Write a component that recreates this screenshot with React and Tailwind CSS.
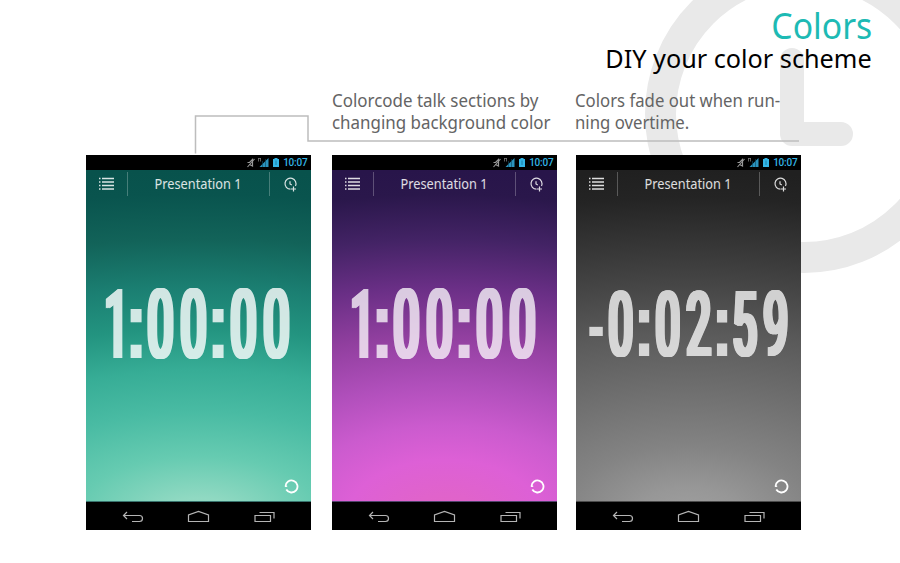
const themes = {
  green:
    "bg-[radial-gradient(720px_345px_at_50%_345px,#97dbc5_0%,#90d9c2_5%,#66cbb1_17%,#49bba3_30%,#37ad96_42%,#239480_54%,#1b7f72_66%,#126359_80%,#09544e_93%,#08524c_100%)]",
  purple:
    "bg-[radial-gradient(600px_345px_at_50%_345px,#e264c6_0%,#e063cb_6%,#dd60d6_16%,#cb5bce_26%,#b04fbb_38%,#913f9f_52%,#6a2f86_66%,#432365_80%,#2a174b_93%,#28154a_100%)]",
  gray:
    "bg-[radial-gradient(640px_345px_at_50%_345px,#9f9f9f_0%,#979797_8%,#838383_20%,#6f6f6f_36%,#5a5a5a_53%,#474747_66%,#343434_80%,#242424_92%,#202020_100%)]",
};

function StatusBar() {
  return (
    <div className="flex h-[15px] items-center justify-end bg-black pr-[3.500px]">
      <svg className="h-[15px] w-[36px]" viewBox="0 0 36 15" fill="none">
        <path d="M1.500 7.500h2l3-3v6.500L3.500 9.500" stroke="#999" strokeWidth="1.200" />
        <path d="M1.500 12 8.500 4" stroke="#999" strokeWidth="1.100" />
        <path d="M12.500 3v3.500M14.500 3v3.500M12 3.500h3" stroke="#777" strokeWidth=".8" />
        <path d="M13.500 12 22.500 3v9Z" fill="#2b93bd" />
        <path d="M16.500 6v6M19.500 4v8" stroke="#0c4a63" strokeWidth=".6" />
        <path d="M27 4h6v8h-6Z" fill="#33b5e5" />
        <path d="M28.500 3h3v1h-3Z" fill="#33b5e5" />
        <path d="M30 5.500v4.500" stroke="#1a7ea6" strokeWidth="1" />
      </svg>
      <span className="ml-[1px] font-['Roboto',sans-serif] text-[10px] font-medium leading-[15px] tracking-[-0.2px] text-[#33b5e5]">10:07</span>
    </div>
  );
}

function ActionBar() {
  return (
    <div className="flex h-[28px] items-center text-white/85">
      <div className="flex h-[24px] w-[42px] items-center justify-center border-r border-white/25">
        <svg className="h-[14px] w-[15px]" viewBox="0 0 15 14" stroke="currentColor" strokeWidth="1.300">
          <path d="M0 1.500h1.500M3 1.500h12M0 5h1.500M3 5h12M0 8.500h1.500M3 8.500h12M0 12h1.500M3 12h12" />
        </svg>
      </div>
      <div className="flex flex-1 justify-center">
        <span className="inline-block scale-x-[.945] whitespace-nowrap font-['Noto_Sans',sans-serif] text-[13.5px] leading-[24px]">Presentation 1</span>
      </div>
      <div className="flex h-[24px] w-[42px] items-center justify-center border-l border-white/25">
        <svg className="h-[15px] w-[15px]" viewBox="0 0 15 15" fill="none" stroke="currentColor" strokeWidth="1.200">
          <path d="M7.500 12.200A5.500 5.500 0 1 1 12.500 9M7 4.200V7l1.800 1M10.500 9.500v5M8 12h5" />
        </svg>
      </div>
    </div>
  );
}

function NavBar() {
  return (
    <div className="flex h-[28px] items-center bg-black">
      <svg className="h-[28px] w-[225px]" viewBox="0 0 225 28" fill="none" stroke="#b4b4b4" strokeWidth="1.200">
        <path d="M41 10 37.500 13.500 41 17M38 13.500H53.500a2.500 2.500 0 0 1 0 6H46" />
        <path d="M102.500 19.500V13L112.500 9.500 122.500 13V19.500Z" />
        <path d="M169 13.500H184.500V19.500H169ZM173.500 10.500H188V16.500" />
      </svg>
    </div>
  );
}

const DIGIT =
  "font-['Roboto',sans-serif] font-medium [text-shadow:1.500px_0_white,-1.500px_0_white,3px_0_white,-3px_0_white,4.300px_0_white,-4.300px_0_white]";

// Cell width and glyph shape for each kind of timer character.
const cells = {
  digit: { cell: "w-[.344em]", glyph: `${DIGIT} scale-x-[.486]` },
  "1": { cell: "w-[.263em]", glyph: `${DIGIT} translate-x-[2px] scale-x-[.45]` },
  ":": { cell: "w-[.170em]", glyph: "font-['Liberation_Sans',sans-serif] font-bold scale-x-[.8]" },
  "-": { cell: "w-[.212em]", glyph: "font-['DejaVu_Sans',sans-serif] font-bold text-[.91em] scale-x-[.53] scale-y-[.78]" },
};

function Timer({ time, className }) {
  return (
    <div className={`mt-[77px] flex items-baseline leading-[100px] text-white ${className}`}>
      {time.split("").map((char, i) => {
        const { cell, glyph } = cells[char] ?? cells.digit;
        return (
          <span key={i} className={`flex shrink-0 justify-center ${cell}`}>
            <span className={`shrink-0 ${glyph}`}>{char}</span>
          </span>
        );
      })}
    </div>
  );
}

function Phone({ theme, time, timeClass }) {
  return (
    <div className="flex h-[375px] w-[225px] flex-col overflow-hidden">
      <StatusBar />
      <div className={`flex h-[332px] flex-col border-b border-white/20 ${themes[theme]}`}>
        <ActionBar />
        <div className="flex-1">
          <Timer time={time} className={timeClass} />
        </div>
        <div className="flex h-[22px] justify-end pr-[12.500px]">
          <svg className="h-[15px] w-[15px]" viewBox="0 0 15 15" fill="none" stroke="#fff" strokeWidth="1.800">
            <path d="M2.300 10.500A6 6 0 1 0 1.500 7.500" />
            <path d="M1 7.300H3.200" strokeWidth="1.200" />
          </svg>
        </div>
      </div>
      <NavBar />
    </div>
  );
}

export default function App() {
  return (
    <div className="relative h-[563px] w-[900px] overflow-hidden bg-white font-['Noto_Sans',sans-serif]">
      <svg className="absolute inset-0 h-full w-full" viewBox="0 0 900 563" fill="none">
        <circle cx="804" cy="114" r="143.500" stroke="#e9e9e9" strokeWidth="31" />
        <path d="M792 60V134H841" stroke="#e9e9e9" strokeWidth="24" strokeLinecap="round" strokeLinejoin="round" />
        <path d="M195.500 153.500V116H308V141H799" stroke="#bdbdbd" strokeWidth="1.500" />
      </svg>
      <div className="relative">
        <header className="flex h-[89px] flex-col items-end pr-[28px] pt-[5px]">
          <h1 className="origin-right scale-x-[.95] text-[35.5px] leading-[40px] text-[#1dbab4]">Colors</h1>
          <p className="origin-right scale-x-[.97] text-[26px] leading-[26px] text-black">DIY your color scheme</p>
        </header>
        <div className="flex h-[66px] pl-[332px] text-[18px] leading-[22px] text-[#646464]">
          <p className="w-[243px] whitespace-nowrap"><span className="inline-block origin-left scale-x-[.94]">Colorcode talk sections by<br />changing background color</span></p>
          <p className="whitespace-nowrap"><span className="inline-block origin-left scale-x-[.93]">Colors fade out when run-<br />ning overtime.</span></p>
        </div>
        <main className="flex pl-[86px]">
          <Phone theme="green" time="1:00:00" timeClass="pl-[16px] text-[96.5px] opacity-80" />
          <div className="ml-[21px]">
            <Phone theme="purple" time="1:00:00" timeClass="pl-[16px] text-[96.5px] opacity-75" />
          </div>
          <div className="ml-[19px]">
            <Phone theme="gray" time="-0:02:59" timeClass="pl-[10px] text-[90.5px] opacity-75" />
          </div>
        </main>
      </div>
    </div>
  );
}
